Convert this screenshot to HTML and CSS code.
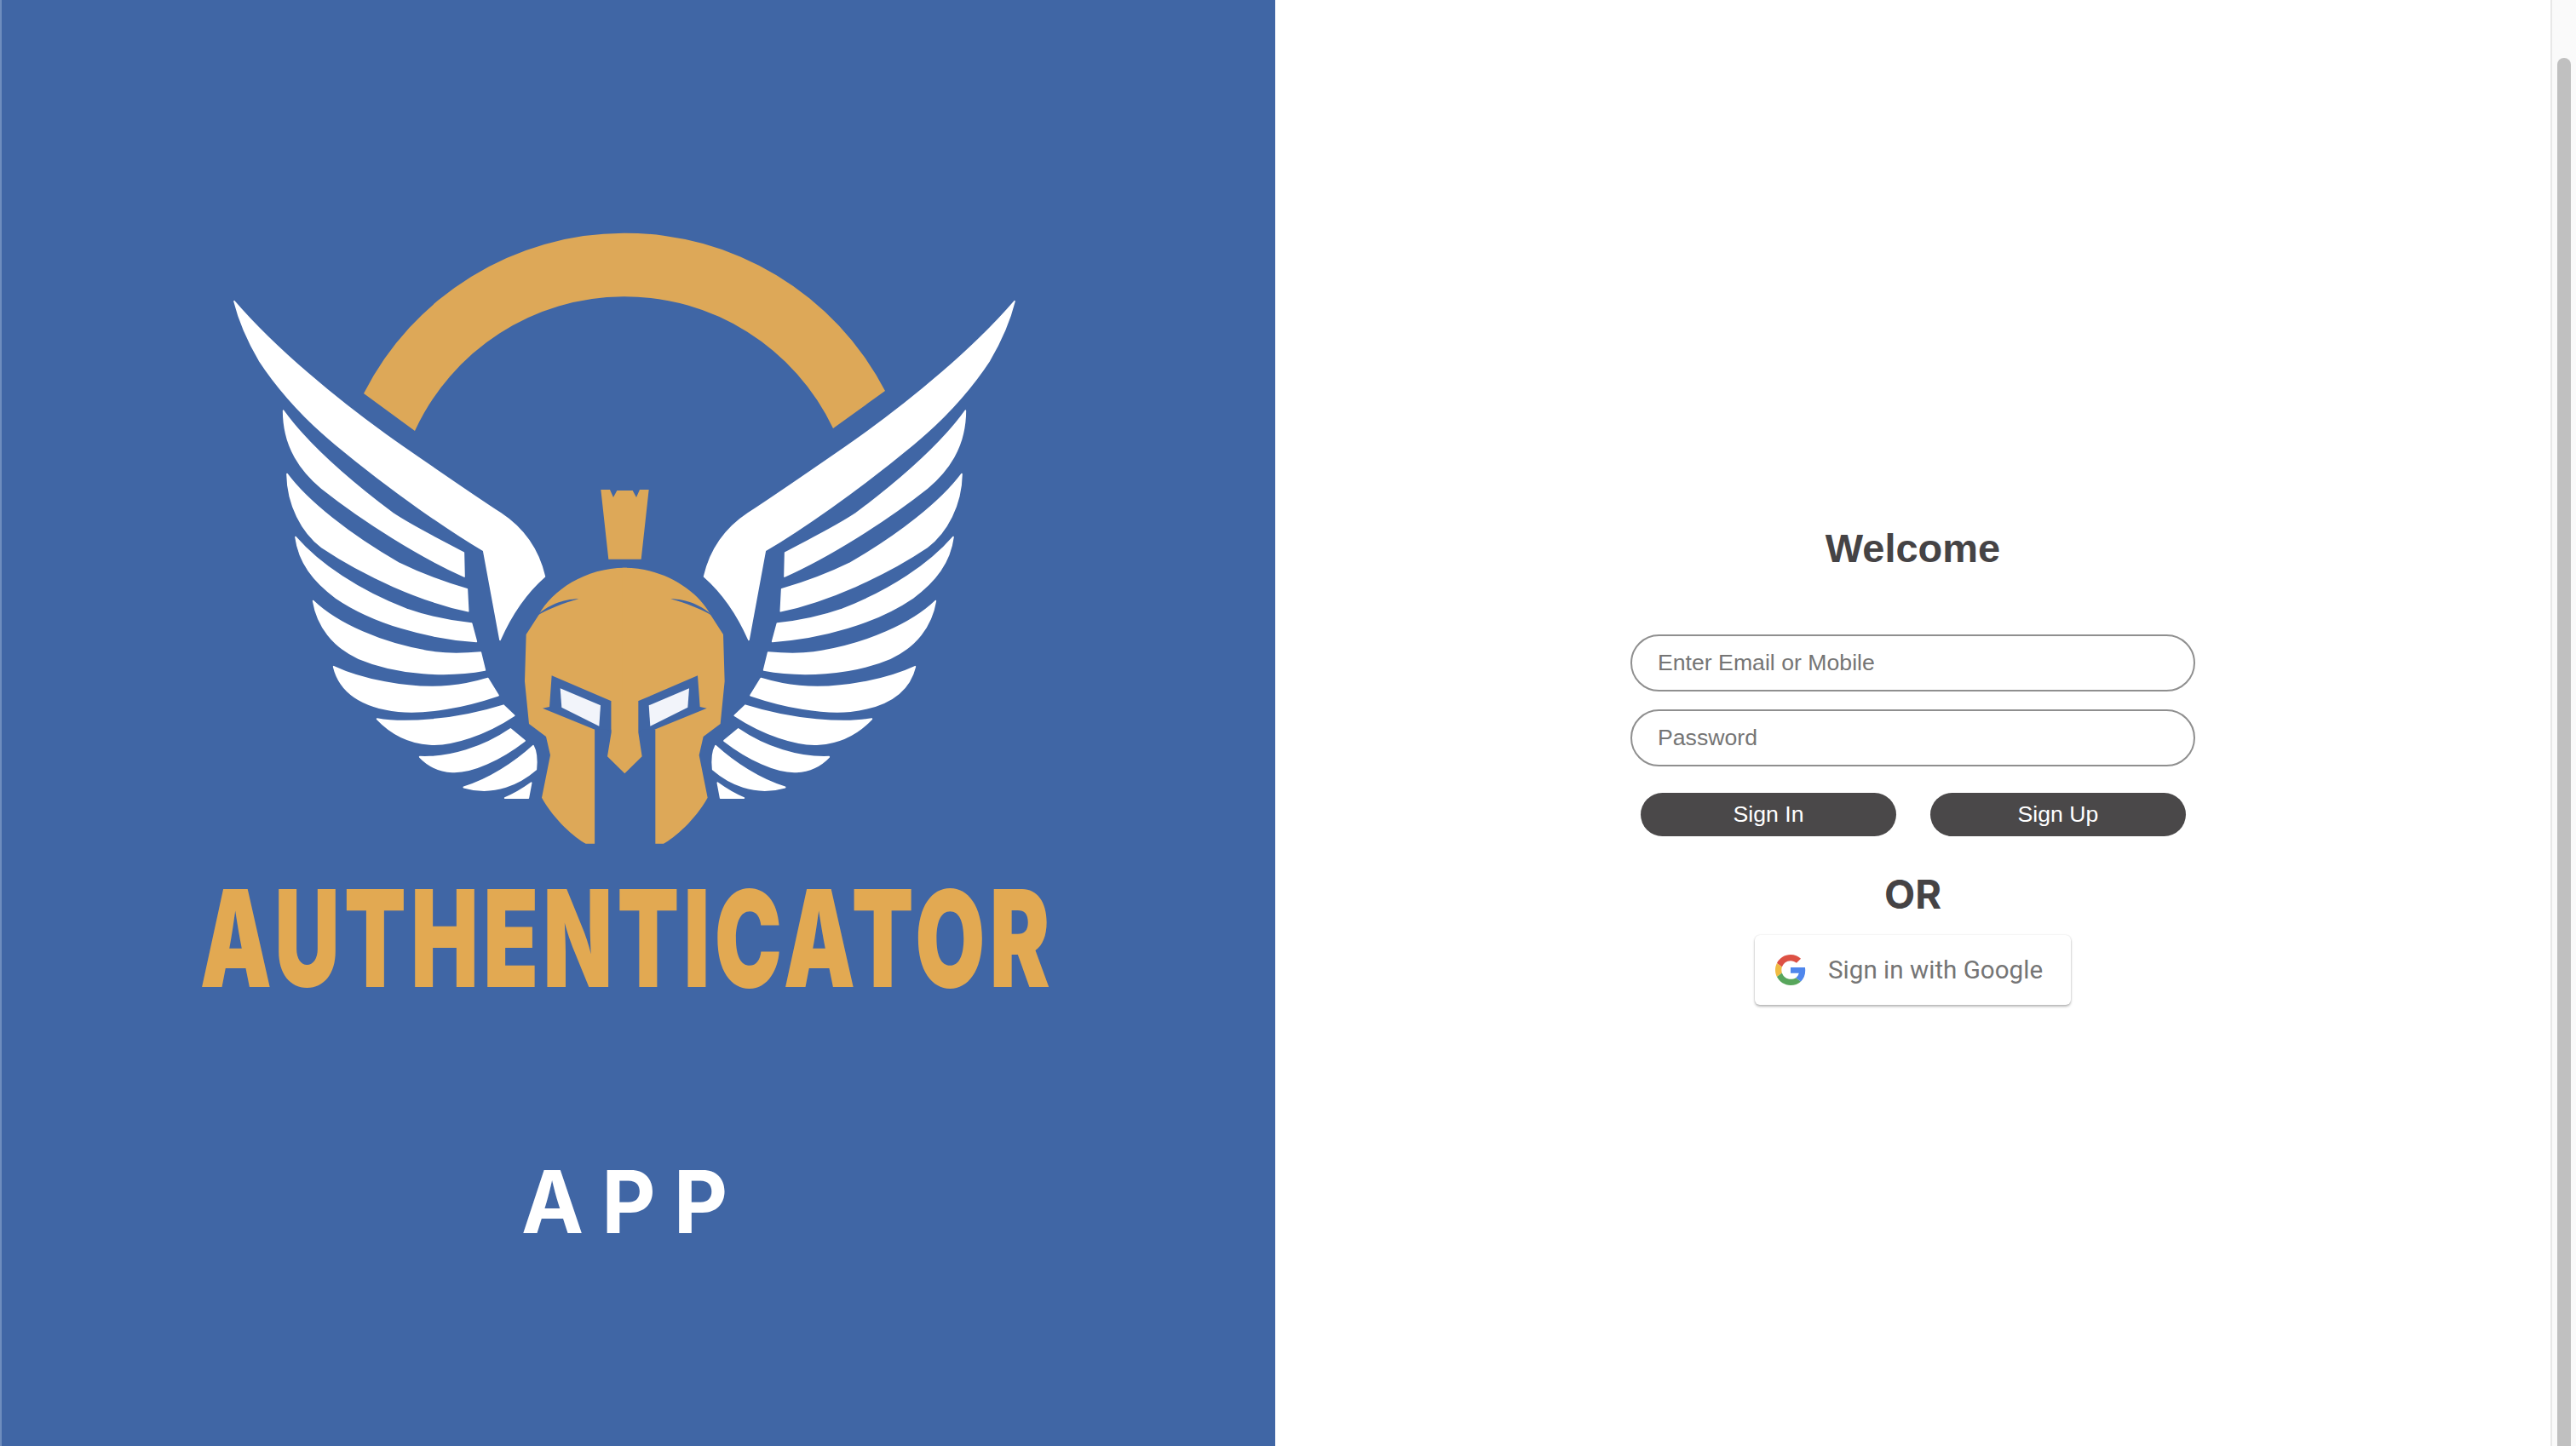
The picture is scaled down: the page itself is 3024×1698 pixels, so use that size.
FILE: index.html
```html
<!DOCTYPE html>
<html lang="en">
<head>
<meta charset="utf-8">
<title>Authenticator App</title>
<link rel="stylesheet" href="styles.css">
</head>
<body>
<div class="page">
  <aside class="hero">
    <svg class="emblem" viewBox="260 265 945 735" xmlns="http://www.w3.org/2000/svg" aria-hidden="true">
      <defs>
        <g id="wing" fill="#fff" stroke="#fff" stroke-width="5" stroke-linejoin="round" transform="translate(260 340) scale(.33333 .39541)">
          <path d="M42 35C180 170 400 330 640 470C760 540 880 610 980 665C1070 715 1115 780 1135 852C1070 900 1020 960 978 1040L920 775C800 715 600 600 400 460C300 390 200 300 130 210C95 160 60 95 42 35Z"/>
          <path d="M215 360C300 460 450 570 600 665C680 710 770 745 850 782L852 852C700 795 500 690 350 590C280 540 215 470 215 360Z"/>
          <path d="M228 548C300 630 450 730 620 812C700 845 780 870 862 890L866 955C700 925 500 850 350 765C280 720 230 640 228 548Z"/>
          <path d="M258 735C340 815 480 895 650 950C725 972 800 985 878 992L895 1045C720 1035 530 990 400 915C320 865 270 810 258 735Z"/>
          <path d="M320 925C400 990 560 1055 750 1078C805 1084 860 1082 910 1078L925 1130C800 1150 620 1145 480 1095C390 1060 335 1000 320 925Z"/>
          <path d="M392 1120C480 1155 650 1190 800 1178C850 1174 895 1165 935 1155L972 1205C850 1240 720 1260 620 1252C500 1240 415 1200 392 1120Z"/>
          <path d="M545 1275C640 1290 820 1280 990 1235L1028 1265C930 1320 810 1355 730 1350C650 1345 590 1315 545 1275Z"/>
          <path d="M695 1388C800 1392 920 1360 1015 1305L1065 1340C980 1395 880 1435 810 1432C760 1430 725 1415 695 1388Z"/>
          <path d="M850 1478C940 1455 1030 1405 1095 1355C1108 1375 1108 1400 1105 1425C1050 1465 960 1505 850 1478Z"/>
          <path d="M995 1510C1030 1498 1060 1482 1088 1465L1078 1510Z"/>
        </g>
        <g id="helmet-half">
          <path fill="#dda858" d="M705 380L697 380C560 380 440 460 395 545L350 615L345 780L360 930L420 975L435 1040L405 1190C450 1270 520 1330 560 1352L592 1352L592 950L705 950Z"/>
          <path fill="#4066a5" d="M440 760L650 850L650 960L637 1045L592 950L408 875L432 870Z"/>
          <path fill="#f2f4fa" d="M470 805L612 865L607 938L475 872Z"/>
          <path fill="#4066a5" d="M390 548C420 515 480 490 535 490C480 505 430 525 390 548Z"/>
        </g>
      </defs>
      <path fill="#dda858" d="M426 462A344 344 0 0 1 1038 459L977 503A271 271 0 0 0 486 506Z"/>
      <use href="#wing"/>
      <use href="#wing" transform="translate(1464 0) scale(-1 1)"/>
      <g transform="translate(500 540) scale(.33333)">
        <path fill="#dda858" d="M613 105H645L657 132L670 108H725L738 132L750 105H782L755 350H640Z"/>
        <use href="#helmet-half"/>
        <use href="#helmet-half" transform="translate(1394 0) scale(-1 1)"/>
        <path fill="#4066a5" d="M592 950H636L650 960V1000L636 1045L697 1105L758 1045L745 1000V960L758 950H805V1360H592Z"/>
        <path fill="#dda858" d="M650 850H745V960L758 1045L697 1105L636 1045L650 960Z"/>
      </g>
    </svg>
    <div class="brand">AUTHENTICATOR</div>
    <div class="app">APP</div>
  </aside>

  <main class="login">
    <h1 class="title">Welcome</h1>
    <form class="form">
      <input class="field" type="text" placeholder="Enter Email or Mobile">
      <input class="field" type="password" placeholder="Password">
      <div class="actions">
        <button class="pill" type="button">Sign In</button>
        <button class="pill" type="button">Sign Up</button>
      </div>
    </form>
    <h2 class="or">OR</h2>
    <button class="google" type="button">
      <svg class="g-icon" viewBox="0 0 48 48" xmlns="http://www.w3.org/2000/svg" aria-hidden="true">
        <path fill="#dd5144" d="M24 9.5c3.54 0 6.71 1.22 9.21 3.6l6.85-6.85C35.9 2.38 30.47 0 24 0 14.62 0 6.51 5.38 2.56 13.22l7.98 6.19C12.43 13.72 17.74 9.5 24 9.5z"/>
        <path fill="#4f86ec" d="M46.98 24.55c0-1.57-.15-3.09-.38-4.55H24v9.02h12.94c-.58 2.96-2.26 5.48-4.78 7.18l7.73 6c4.51-4.18 7.09-10.36 7.09-17.65z"/>
        <path fill="#f0bb42" d="M10.53 28.59c-.48-1.45-.76-2.99-.76-4.59s.27-3.14.76-4.59l-7.98-6.19C.92 16.46 0 20.12 0 24c0 3.88.92 7.54 2.56 10.78l7.97-6.19z"/>
        <path fill="#58a65c" d="M24 48c6.48 0 11.93-2.13 15.89-5.81l-7.73-6c-2.15 1.45-4.92 2.3-8.16 2.3-6.26 0-11.57-4.22-13.47-9.91l-7.98 6.19C6.51 42.62 14.62 48 24 48z"/>
      </svg>
      <span>Sign in with Google</span>
    </button>
  </main>

  <div class="scrollbar"><div class="thumb"></div></div>
</div>
</body>
</html>
```

FILE: styles.css
```css
html, body {
  margin: 0;
  height: 100%;
  overflow: hidden;
  background: #fff;
}

.page {
  display: flex;
  height: 1698px;
  font-family: "Liberation Sans", Arial, sans-serif;
}

.hero {
  box-sizing: border-box;
  flex: 0 0 1497px;
  height: 1698px;
  padding: 265px 32px 0 0;
  display: flex;
  flex-direction: column;
  align-items: center;
  background: #4066a5;
  border-left: 2px solid #6e8dbe;
  overflow: hidden;
}

.emblem {
  display: block;
  flex: none;
  width: 945px;
  height: 735px;
}

.brand {
  flex: none;
  margin-top: 38px;
  height: 128px;
  line-height: 128px;
  padding-left: 8px;
  font-family: Inter, sans-serif;
  font-weight: 900;
  font-size: 158px;
  letter-spacing: 8px;
  color: #e2a952;
  white-space: nowrap;
  transform: scaleX(.671);
  filter: blur(.7px);
}

.app {
  flex: none;
  margin-top: 195px;
  height: 100px;
  line-height: 100px;
  padding-left: 22px;
  font-family: Inter, sans-serif;
  font-weight: 700;
  font-size: 102px;
  letter-spacing: 22px;
  color: #fff;
  transform: scaleX(.96);
  filter: blur(.7px);
}

.login {
  flex: 1;
  min-width: 0;
  padding-top: 614px;
  display: flex;
  flex-direction: column;
  align-items: center;
  color: #454345;
}

.title {
  margin: 0;
  font-size: 47px;
  line-height: 60px;
  font-weight: 700;
}

.form {
  margin-top: 71px;
  width: 663px;
  display: flex;
  flex-direction: column;
  align-items: stretch;
}

.field {
  box-sizing: border-box;
  height: 67px;
  margin-bottom: 21px;
  padding: 0 30px;
  border: 2px solid #8f8f8f;
  border-radius: 34px;
  background: #fff;
  font-family: "Liberation Sans", Arial, sans-serif;
  font-size: 26.67px;
  outline: none;
}

.field::placeholder {
  color: #757575;
  opacity: 1;
}

.actions {
  margin-top: 10px;
  padding: 0 12px;
  display: flex;
  gap: 40px;
}

.pill {
  flex: 0 0 300px;
  height: 51px;
  padding: 0;
  border: 0;
  border-radius: 26px;
  background: #4a4849;
  color: #fff;
  font-family: "Liberation Sans", Arial, sans-serif;
  font-size: 26.67px;
}

.or {
  margin: 41px 0 0;
  font-family: Inter, sans-serif;
  font-size: 47px;
  line-height: 54px;
  font-weight: 700;
}

.google {
  box-sizing: border-box;
  margin-top: 21px;
  width: 371px;
  height: 82px;
  padding: 0 0 0 24px;
  display: flex;
  align-items: center;
  gap: 26px;
  border: 0;
  border-radius: 6px;
  background: #fff;
  box-shadow: 0 2px 3px rgba(0, 0, 0, .28), 0 0 2px rgba(0, 0, 0, .12);
  color: #757575;
  font-family: Roboto, sans-serif;
  font-weight: 400;
  font-size: 29.6px;
}

.g-icon {
  flex: none;
  width: 36px;
  height: 36px;
}

.scrollbar {
  box-sizing: border-box;
  flex: 0 0 30px;
  height: 1698px;
  padding: 68px 6px 0 6px;
  background: #fafafa;
  border-left: 2px solid #e8e8e8;
}

.thumb {
  width: 16px;
  height: 100%;
  background: #c0c0c0;
  border-radius: 8px 8px 0 0;
}
```
